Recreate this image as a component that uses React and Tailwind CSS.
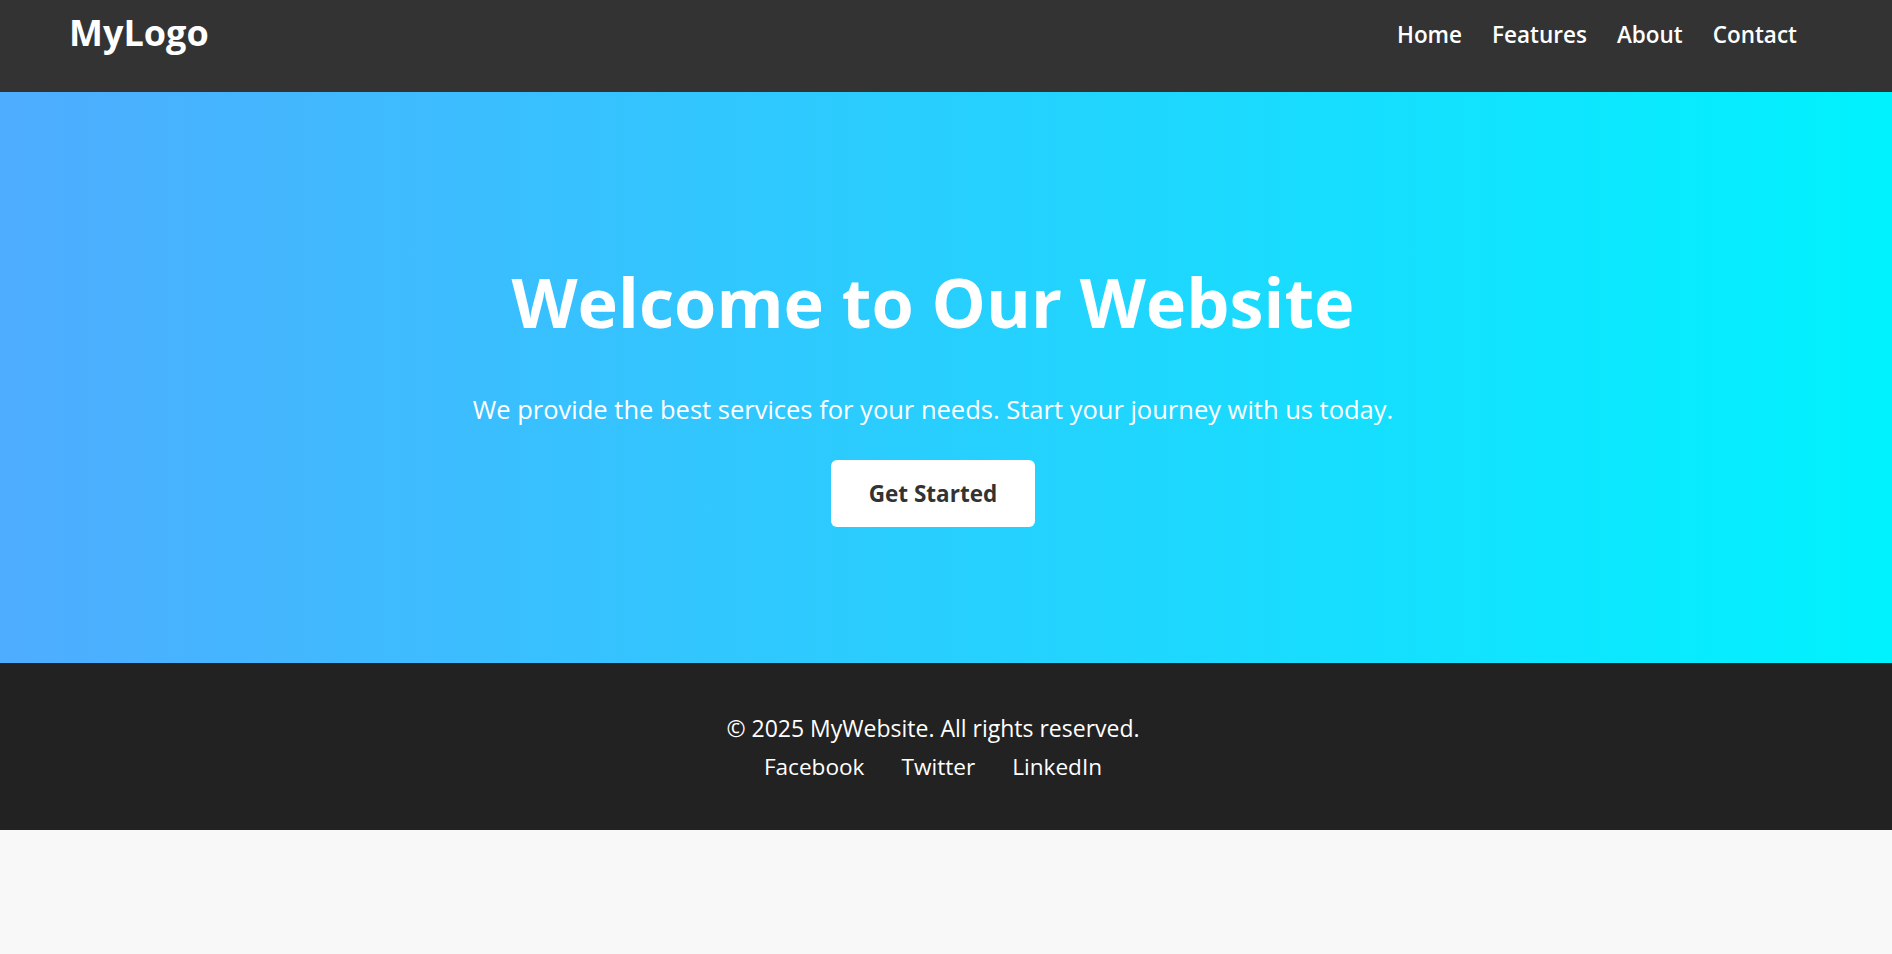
import React from 'react'

const navLinks = ['Home', 'Features', 'About', 'Contact']
const socialLinks = ['Facebook', 'Twitter', 'LinkedIn']

export default function App() {
  return (
    <div className="min-h-[954px] bg-[#f8f8f8] font-['Open_Sans',sans-serif]">
      <header className="h-[92px] bg-[#333333] flex items-start justify-between pl-[69px] pr-[95px]">
        <div className="mt-[11px] text-[36px] leading-[1.2] font-bold text-white">MyLogo</div>
        <nav className="mt-[18px] flex gap-[30px]">
          {navLinks.map((link) => (
            <a key={link} href="#" className="text-[22.5px] leading-[1.5] font-semibold text-white">
              {link}
            </a>
          ))}
        </nav>
      </header>

      <section className="h-[571px] bg-[linear-gradient(to_right,#4facfe,#00f2fe)] flex flex-col items-center pt-[169px] pr-[26px] text-white">
        <h1 className="text-[68.4px] leading-[1.2] font-bold">Welcome to Our Website</h1>
        <p className="mt-[47px] text-[25.5px] leading-[1.5]">
          We provide the best services for your needs. Start your journey with us today.
        </p>
        <button className="mt-[32px] h-[67px] px-[38px] rounded-[6px] bg-white text-[#333333] text-[22.5px] font-bold">
          Get Started
        </button>
      </section>

      <footer className="h-[167px] bg-[#222222] flex flex-col items-center pt-[48px] pr-[26px] text-white">
        <p className="text-[23px] leading-[1.5]">© 2025 MyWebsite. All rights reserved.</p>
        <div className="mt-[4px] flex gap-[37px]">
          {socialLinks.map((link) => (
            <a key={link} href="#" className="text-[22.6px] leading-[1.5] text-white">
              {link}
            </a>
          ))}
        </div>
      </footer>
    </div>
  )
}
